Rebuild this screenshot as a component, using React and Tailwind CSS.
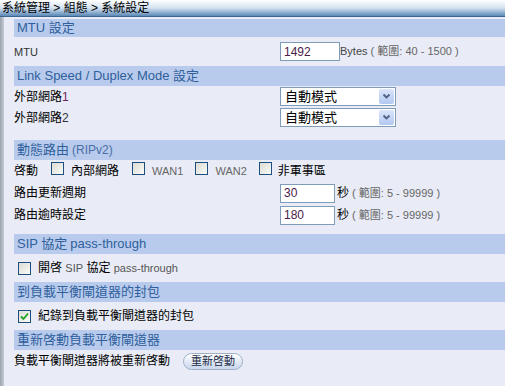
function Header({ children, h = "h-[20px]" }) {
  return (
    <div className={`${h} bg-[#b8cbec] flex items-center pl-[3px] text-[13px] text-[#2f5f9c]`}>
      {children}
    </div>
  );
}

function Box({ checked }) {
  return (
    <span className="inline-flex w-[13px] h-[13px] border border-[#1c4f7f] bg-gradient-to-br from-[#dcdcd4] to-[#fbfbf8] items-center justify-center shrink-0">
      {checked && (
        <svg width="9" height="9" viewBox="0 0 9 9">
          <path d="M1 4.5 L3.5 7 L8 1.5" stroke="#21a121" strokeWidth="1.8" fill="none" />
        </svg>
      )}
    </span>
  );
}

function TextBox({ value, w }) {
  return (
    <div className={`${w} h-[19px] bg-white border border-[#7f9db9] flex items-center px-[3px] text-[12px] text-[#4a1a4a]`}>
      {value}
    </div>
  );
}

function Select() {
  return (
    <div className="w-[116px] h-[19px] bg-white border border-[#7f9db9] flex items-center text-[13px] text-black pl-[4px]">
      <span className="flex-1">自動模式</span>
      <span className="w-[15px] h-[15px] mr-[1px] rounded-[2px] bg-gradient-to-b from-[#dce6fb] to-[#b3c8f1] flex items-center justify-center">
        <svg width="9" height="7" viewBox="0 0 9 7">
          <path d="M1.5 1.5 L4.5 4.5 L7.5 1.5" stroke="#4d6185" strokeWidth="1.8" fill="none" />
        </svg>
      </span>
    </div>
  );
}

function Row({ label, children, h = "h-[21px]" }) {
  return (
    <div className={`${h} flex items-center`}>
      <div className="w-[266px] text-[12px] text-black">{label}</div>
      <div className="flex items-center">{children}</div>
    </div>
  );
}

const Range = ({ unit, text }) => (
  <span className="ml-[2px] text-[12px] text-black">
    {unit}
    <span className="text-[11px] text-[#666]"> ( 範圍: {text} )</span>
  </span>
);

export default function App() {
  return (
    <div
      className="w-[505px] h-[386px] bg-[#e9ecf6] flex flex-col overflow-hidden"
      style={{ fontFamily: '"Liberation Sans", "Noto Sans CJK TC", sans-serif' }}
    >
      <div className="h-[17px] shrink-0 bg-gradient-to-b from-white via-[#d4e2f0] to-[#5b89b6] border-b border-[#3a6690] flex items-center pl-[2px] text-[12px] text-black leading-none">
        系統管理 &gt; 組態 &gt; 系統設定
      </div>
      <div className="flex flex-1">
        <div className="w-[4px] bg-gradient-to-r from-[#9aa3ad] to-[#c7ccd3]" />
        <div className="flex-1 pl-[10px] pt-[2px]">
          <Header h="h-[18px]">MTU 設定</Header>
          <Row label={<span className="text-[11px] text-[#333]">MTU</span>} h="h-[29px]">
            <TextBox value="1492" w="w-[60px]" />
            <span className="text-[11px] text-[#444]">Bytes<span className="text-[#666]"> ( 範圍: 40 - 1500 )</span></span>
          </Row>
          <Header>Link Speed / Duplex Mode 設定</Header>
          <Row label={<>外部網路<span className="text-[12px] text-[#70245f]">1</span></>}>
            <Select />
          </Row>
          <Row label={<>外部網路<span className="text-[12px] text-[#333]">2</span></>}>
            <Select />
          </Row>
          <div className="h-[12px]" />
          <Header>
            動態路由{" "}<span className="ml-[3px] text-[12px] text-[#4a6fa8]">(RIPv2)</span>
          </Header>
          <div className="h-[22px] flex items-center text-[12px] text-black">
            <span>啓動</span>
            <span className="ml-[13px]"><Box /></span>
            <span className="ml-[7px]">內部網路</span>
            <span className="ml-[13px]"><Box /></span>
            <span className="ml-[7px] text-[11px] text-[#666]">WAN1</span>
            <span className="ml-[12px]"><Box /></span>
            <span className="ml-[7px] text-[11px] text-[#666]">WAN2</span>
            <span className="ml-[12px]"><Box /></span>
            <span className="ml-[6px]">非軍事區</span>
          </div>
          <Row label="路由更新週期" h="h-[22px]">
            <TextBox value="30" w="w-[55px]" />
            <Range unit="秒" text="5 - 99999" />
          </Row>
          <Row label="路由逾時設定" h="h-[22px]">
            <TextBox value="180" w="w-[55px]" />
            <Range unit="秒" text="5 - 99999" />
          </Row>
          <div className="h-[8px]" />
          <Header>
            SIP 協定{" "}<span className="ml-[3px] text-[13px]">pass-through</span>
          </Header>
          <div className="h-[28px] flex items-center pl-[4px] text-[12px] text-black">
            <Box />
            <span className="ml-[7px]">開啓 <span className="text-[11px] text-[#555]">SIP</span> 協定 <span className="text-[11px] text-[#555]">pass-through</span></span>
          </div>
          <Header>到負載平衡閘道器的封包</Header>
          <div className="h-[28px] flex items-center pl-[4px] text-[12px] text-black">
            <Box checked />
            <span className="ml-[7px]">紀錄到負載平衡閘道器的封包</span>
          </div>
          <Header>重新啓動負載平衡閘道器</Header>
          <div className="h-[22px] flex items-center text-[12px] text-black">
            <span>負載平衡閘道器將被重新啓動</span>
            <span className="ml-[13px] h-[17px] w-[60px] justify-center rounded-full border border-[#9fb0c8] bg-gradient-to-b from-white to-[#c9d6ec] flex items-center text-[11px] text-[#1a2a44]">
              重新啓動
            </span>
          </div>
        </div>
      </div>
    </div>
  );
}
